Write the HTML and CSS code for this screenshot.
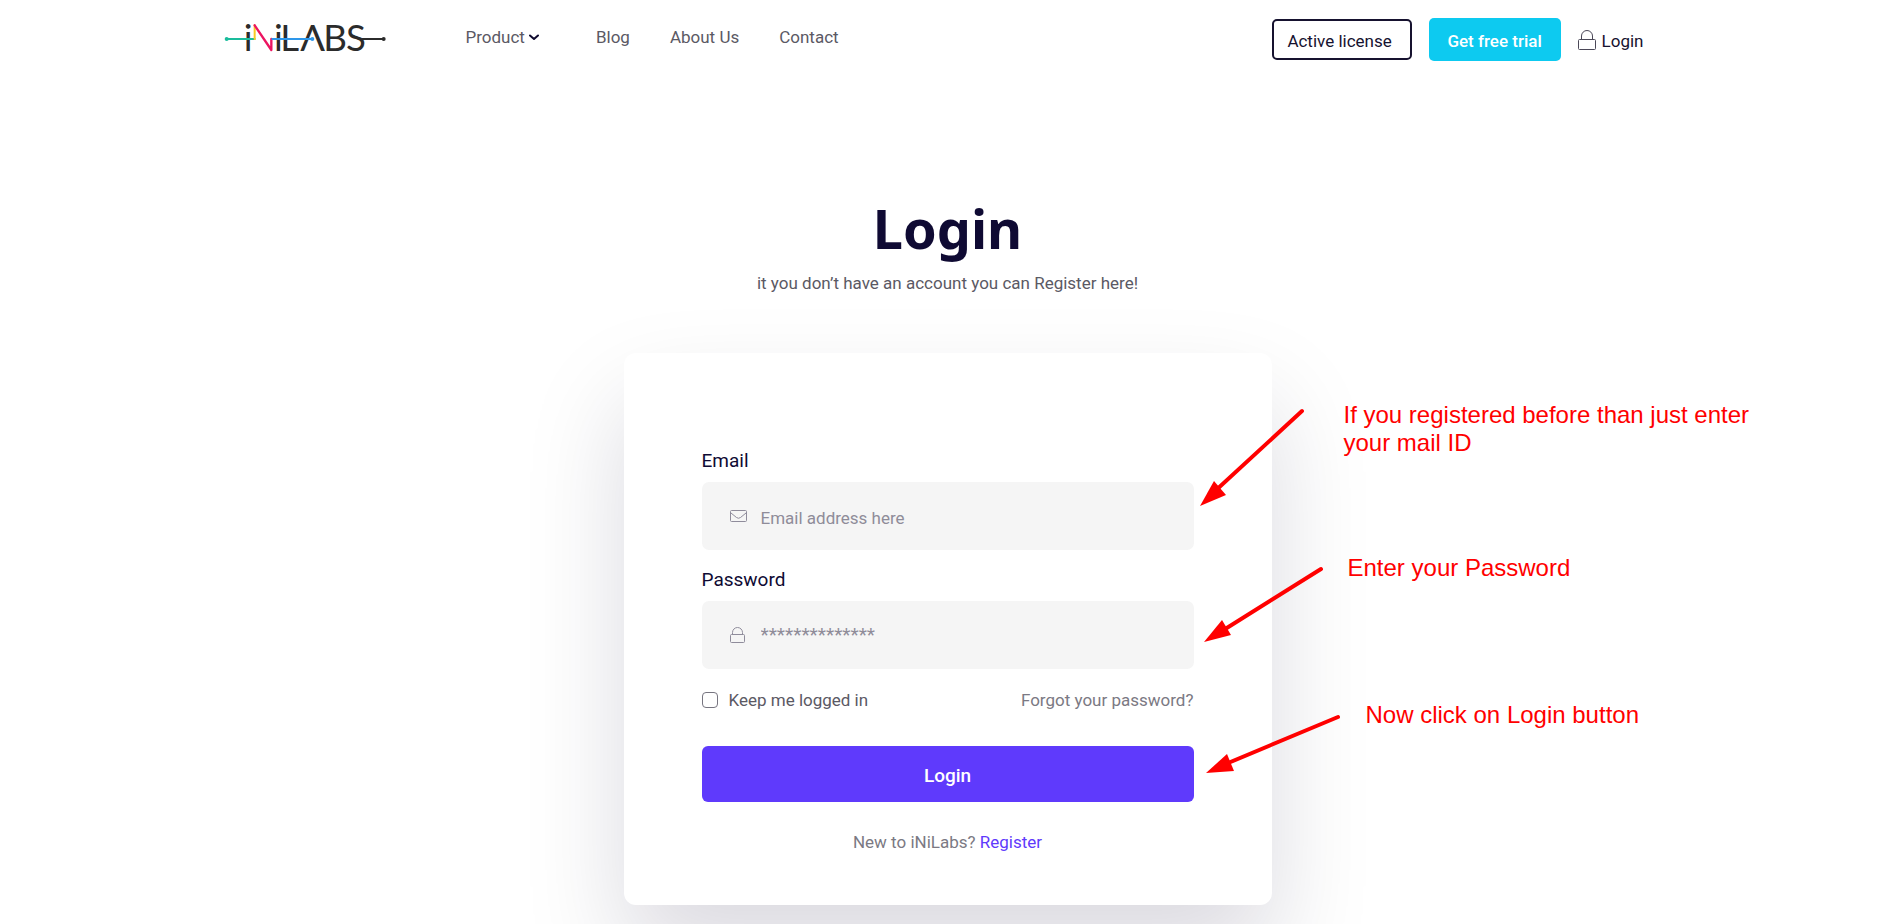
FILE: index.html
```html
<!DOCTYPE html>
<html lang="en">
<head>
<meta charset="utf-8">
<meta name="viewport" content="width=device-width, initial-scale=1">
<title>Login - iNiLabs</title>
<link rel="stylesheet" href="styles.css">
</head>
<body>
<header class="header">
  <a class="logo" href="#" aria-label="iNiLabs home">
    <svg class="logo-mark" viewBox="40 5 489 153" fill="none" stroke-linecap="round" stroke-linejoin="round">
      <g class="logo-letters">
        <text x="99" y="122">i</text>
        <text x="190" y="122">i</text>
        <text x="209" y="122">L</text>
        <text x="269" y="122">Λ</text>
        <text x="338" y="122">B</text>
        <text x="406" y="122">S</text>
      </g>
      <path d="M47 86H132" stroke="#1abc9c" stroke-width="6"/>
      <circle cx="48" cy="86" r="6" fill="#1abc9c"/>
      <path d="M132 86V45" stroke="#f9ca24" stroke-width="6"/>
      <path d="M132 45L182 119V86" stroke="#ec1561" stroke-width="7"/>
      <path d="M185 86H305" stroke="#2e97ea" stroke-width="6"/>
      <circle cx="305" cy="86" r="6" fill="#2e97ea"/>
      <path d="M455 86H519" stroke="#2b2b2b" stroke-width="6"/>
      <circle cx="519" cy="86" r="6" fill="#2b2b2b"/>
    </svg>
  </a>
  <nav class="nav">
    <a class="nav-link nav-product" href="#">Product
      <svg class="chevron" viewBox="0 0 10 7" fill="none" stroke="#0f0a2e" stroke-width="2" stroke-linecap="round" stroke-linejoin="round"><path d="M1 1.5L5 5L9 1.5"/></svg>
    </a>
    <a class="nav-link" href="#">Blog</a>
    <a class="nav-link" href="#">About Us</a>
    <a class="nav-link" href="#">Contact</a>
  </nav>
  <div class="actions">
    <button class="btn btn-outline" type="button">Active license</button>
    <button class="btn btn-trial" type="button">Get free trial</button>
    <a class="login-link" href="#">
      <svg class="lock-large" viewBox="0 0 18 20" fill="none" stroke="#4b4858"><rect x=".5" y="9.5" width="17" height="10" rx="1"/><path d="M3.500 9.500V6a5.500 5.500 0 0 1 11 0V9.500"/></svg>
      <span class="login-text">Login</span>
    </a>
  </div>
</header>
<main class="main">
  <h1 class="title">Login</h1>
  <p class="subtitle">it you don’t have an account you can Register here!</p>
  <section class="card">
    <form class="form">
      <label class="label" for="email">Email</label>
      <div class="field">
        <svg class="field-icon" viewBox="0 0 17 17" fill="none" stroke="#8f8c9b"><rect x=".5" y="2.500" width="16" height="11" rx="1"/><path d="M1 5L6.500 9.500Q8.500 11 10.500 9.500L16 5"/></svg>
        <input class="input" id="email" type="email" placeholder="Email address here">
      </div>
      <label class="label" for="password">Password</label>
      <div class="field">
        <svg class="field-icon" viewBox="0 0 17 17" fill="none" stroke="#8f8c9b"><rect x=".5" y="7.500" width="14" height="8" rx="1"/><path d="M2.500 7.500V5.500a5 5 0 0 1 10 0V7.500"/></svg>
        <input class="input input-password" id="password" type="password" placeholder="**************">
      </div>
      <div class="options">
        <label class="remember" for="remember"><input class="checkbox" id="remember" type="checkbox">Keep me logged in</label>
        <a class="forgot" href="#">Forgot your password?</a>
      </div>
      <button class="submit" type="submit">Login</button>
      <p class="signup">New to iNiLabs? <a class="register" href="#">Register</a></p>
    </form>
    <svg class="arrows" viewBox="0 0 730 552" fill="#f00" stroke-linecap="round">
      <g stroke="#f00" stroke-width="4"><path d="M678 58L590 139"/><path d="M697 216L598 278"/><path d="M714 364L604 410"/></g>
      <path d="M576 153L590 128L602 142Z"/>
      <path d="M580 289L598 267L607 282Z"/>
      <path d="M582 420L603 401L610 418Z"/>
    </svg>
    <p class="note note-email">If you registered before than just enter<br>your mail ID</p>
    <p class="note note-password">Enter your Password</p>
    <p class="note note-submit">Now click on Login button</p>
  </section>
</main>
</body>
</html>
```
FILE: styles.css
```css
* {
  box-sizing: border-box;
}

body {
  min-height: 100vh;
  margin: 0;
  background: #fff;
  color: #5b5964;
  font-family: Roboto, "Noto Sans", sans-serif;
  font-size: 17px;
  line-height: 24px;
}

a {
  color: inherit;
  text-decoration: none;
}

p,
h1 {
  margin: 0;
}

svg {
  display: block;
  flex: none;
}

button,
input {
  font: inherit;
}

.header {
  display: flex;
  align-items: flex-start;
  max-width: 1446px;
  margin: 0 auto;
  padding: 12px 26px 0 0;
}

.logo-mark {
  width: 163px;
  height: 51px;
  overflow: visible;
}

.logo-letters {
  fill: #2b2b2b;
  font-family: Lato, "Noto Sans", sans-serif;
  font-size: 110px;
}

.nav {
  display: flex;
  gap: 40px;
  padding: 13px 0 0 79px;
}

.nav-product {
  display: flex;
  align-items: center;
  gap: 4px;
  margin-right: 17px;
}

.chevron {
  width: 10px;
  height: 7px;
}

.actions {
  display: flex;
  align-items: center;
  gap: 17px;
  margin-left: auto;
  padding-top: 6px;
  color: #16122f;
}

.btn {
  height: 43px;
  padding: 3px 0 0;
  border: 0;
  border-radius: 5px;
  cursor: pointer;
}

.btn-outline {
  width: 140px;
  height: 41px;
  padding-right: 4px;
  border: 2px solid #16122f;
  background: #fff;
  color: #16122f;
}

.btn-trial {
  width: 132px;
  background: #0dcaf0;
  color: #fff;
  font-weight: 500;
}

.login-link {
  display: flex;
  align-items: center;
  gap: 6px;
}

.login-text {
  padding-top: 3px;
}

.lock-large {
  width: 18px;
  height: 20px;
}

.main {
  display: flex;
  flex-direction: column;
  align-items: center;
  padding: 129px 16px 19px 18px;
  overflow: hidden;
}

.title {
  color: #0f0a33;
  font-family: "Noto Sans", sans-serif;
  font-size: 54px;
  font-weight: 700;
  line-height: 72px;
}

.subtitle {
  padding-top: 7px;
}

.card {
  position: relative;
  width: 100%;
  max-width: 648px;
  margin-top: 58px;
  padding: 94px 78px 51px;
  border-radius: 12px;
  background: #fff;
  box-shadow: 0 50px 100px rgba(15, 10, 46, 0.15);
}

.form {
  display: flex;
  flex-direction: column;
}

.label {
  padding-bottom: 8px;
  color: #0f0a33;
  font-size: 19px;
  line-height: 27px;
}

.field {
  display: flex;
  align-items: center;
  gap: 14px;
  height: 68px;
  margin-bottom: 16px;
  padding: 0 28px;
  border-radius: 7px;
  background: #f5f5f5;
}

.field-icon {
  width: 17px;
  height: 17px;
}

.input {
  flex: 1;
  min-width: 0;
  padding: 4px 0 0;
  border: 0;
  outline: 0;
  background: transparent;
  color: #0f0a33;
}

.input-password {
  padding: 0;
  font-size: 19px;
}

.input::placeholder {
  color: #8f8c99;
  opacity: 1;
}

.options {
  display: flex;
  align-items: center;
  justify-content: space-between;
  padding-top: 3px;
}

.remember {
  display: flex;
  align-items: center;
  gap: 11px;
}

.checkbox {
  appearance: none;
  width: 16px;
  height: 16px;
  margin: 0;
  border: 1px solid #777580;
  border-radius: 4px;
}

.checkbox:checked {
  background: #5f3afc;
}

.forgot,
.signup {
  color: #7b7983;
}

.submit {
  height: 56px;
  margin-top: 34px;
  padding: 3px 0 0;
  border: 0;
  border-radius: 6px;
  background: #5f3afc;
  color: #fff;
  font-size: 19px;
  font-weight: 500;
  cursor: pointer;
}

.signup {
  padding-top: 28px;
  text-align: center;
}

.register {
  color: #5f3afc;
}

.arrows {
  position: absolute;
  top: 0;
  left: 0;
  width: 730px;
  height: 552px;
  pointer-events: none;
}

.note {
  position: absolute;
  color: #f00;
  font-family: "Liberation Sans", Arial, sans-serif;
  font-size: 24px;
  line-height: 28px;
  white-space: nowrap;
}

.note-email {
  top: 48px;
  left: 720px;
}

.note-password {
  top: 201px;
  left: 724px;
}

.note-submit {
  top: 348px;
  left: 742px;
}
```
